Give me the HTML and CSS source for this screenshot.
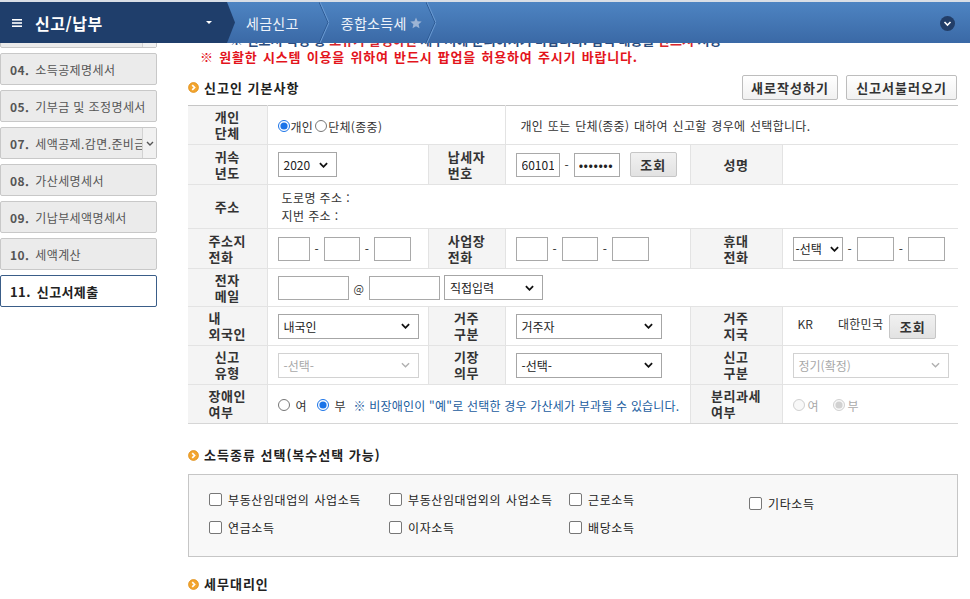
FILE: index.html
```html
<!DOCTYPE html>
<html lang="ko">
<head>
<meta charset="utf-8">
<title>신고/납부 - 종합소득세</title>
<link rel="stylesheet" href="styles.css">
</head>
<body>
<header class="topbar">
  <div class="menu">
    <svg class="hamb" viewBox="0 0 10 8"><rect x="0" y="0" width="10" height="1.6" fill="#fff"/><rect x="0" y="3.2" width="10" height="1.6" fill="#fff"/><rect x="0" y="6.4" width="10" height="1.6" fill="#fff"/></svg>
    <span class="title">신고/납부</span>
    <svg class="caret" viewBox="0 0 6 3"><polygon points="0,0 6,0 3,3" fill="#fff"/></svg>
  </div>
  <div class="crumb">
    <span class="ctext c1">세금신고</span>
    <svg class="sep" viewBox="0 0 10 41"><polyline points="0,0 9,20.5 0,41" fill="none" stroke="#2d5a93" stroke-width="1"/><polyline points="1,0 10,20.5 1,41" fill="none" stroke="#6b9bd3" stroke-width="1"/></svg>
  </div>
  <div class="crumb">
    <span class="ctext c2">종합소득세</span>
    <svg class="star" viewBox="0 0 12 12"><polygon points="6,0.5 7.6,4.3 11.7,4.6 8.6,7.3 9.5,11.3 6,9.2 2.5,11.3 3.4,7.3 0.3,4.6 4.4,4.3" fill="#9db4d4"/></svg>
    <svg class="sep sep2" viewBox="0 0 10 41"><polyline points="0,0 9,20.5 0,41" fill="none" stroke="#2d5a93" stroke-width="1"/><polyline points="1,0 10,20.5 1,41" fill="none" stroke="#6b9bd3" stroke-width="1"/></svg>
  </div>
  <div class="circle-btn"><svg viewBox="0 0 15 15"><circle cx="7.5" cy="7.5" r="7.5" fill="#223e68"/><polyline points="4.5,6 7.5,9 10.5,6" fill="none" stroke="#fff" stroke-width="1.6"/></svg></div>
</header>

<div class="layout">
  <nav class="side">
    <ul class="snav">
      <li class="ghost"><span class="txt"></span><span class="dd"></span></li>
      <li><span class="txt"><b>04.</b>소득공제명세서</span></li>
      <li><span class="txt"><b>05.</b>기부금 및 조정명세서</span></li>
      <li><span class="txt"><b>07.</b>세액공제.감면.준비금명세서</span><span class="dd"><svg viewBox="0 0 8 5"><polyline points="1,1 4,4 7,1" fill="none" stroke="#555" stroke-width="1.4"/></svg></span></li>
      <li><span class="txt"><b>08.</b>가산세명세서</span></li>
      <li><span class="txt"><b>09.</b>기납부세액명세서</span></li>
      <li><span class="txt"><b>10.</b>세액계산</span></li>
      <li class="on"><span class="txt"><b>11.</b>신고서제출</span></li>
    </ul>
  </nav>

  <main class="main">
    <div class="cutline"><span>※ 신고서 작성 중 <em>오류가 발생하면</em> 세무서에 문의하시기 바랍니다. 입력 내용을 <em>반드시</em> 저장</span></div>
    <p class="notice">※ 원활한 시스템 이용을 위하여 반드시 팝업을 허용하여 주시기 바랍니다.</p>

    <div class="sec-row">
      <h3 class="sec-title"><svg class="bul" viewBox="0 0 12 12"><circle cx="6" cy="6" r="5.4" fill="#f3a52e" stroke="#dc8a12" stroke-width="0.8"/><polyline points="4.6,3.4 7.2,6 4.6,8.6" fill="none" stroke="#fff" stroke-width="1.8"/></svg>신고인 기본사항</h3>
      <div class="btns">
        <button class="btn w96">새로작성하기</button>
        <button class="btn w111">신고서불러오기</button>
      </div>
    </div>

    <table class="form">
      <colgroup><col class="c79"><col class="c161"><col class="c77"><col class="c185"><col class="c92"><col class="c176"></colgroup>
      <tr class="h39">
        <th><span class="lb">개인<br>단체</span></th>
        <td colspan="2"><label class="rd tight"><input type="radio" name="kind" checked>개인</label><label class="rd tight"><input type="radio" name="kind">단체(종중)</label></td>
        <td colspan="3" class="desc">개인 또는 단체(종중) 대하여 신고할 경우에 선택합니다.</td>
      </tr>
      <tr class="h40">
        <th><span class="lb">귀속<br>년도</span></th>
        <td><div class="sel w59"><span>2020</span><svg class="chev" viewBox="0 0 10 6"><polyline points="1,1 5,5 9,1"/></svg></div></td>
        <th><span class="lb">납세자<br>번호</span></th>
        <td><input class="ipt w44" type="text" value="60101"><span class="dash">-</span><input class="ipt w46 pw" type="password" value="1234567"><button class="btn-s">조회</button></td>
        <th><span class="lb">성명</span></th>
        <td></td>
      </tr>
      <tr class="h44">
        <th><span class="lb">주소</span></th>
        <td colspan="5" class="addr"><div>도로명 주소 :</div><div>지번 주소 :</div></td>
      </tr>
      <tr class="h40">
        <th><span class="lb">주소지<br>전화</span></th>
        <td><input class="ipt w32" type="text"><span class="dash">-</span><input class="ipt w36" type="text"><span class="dash">-</span><input class="ipt w37" type="text"></td>
        <th><span class="lb">사업장<br>전화</span></th>
        <td><input class="ipt w32" type="text"><span class="dash">-</span><input class="ipt w36" type="text"><span class="dash">-</span><input class="ipt w37" type="text"></td>
        <th><span class="lb">휴대<br>전화</span></th>
        <td><div class="sel w50 small"><span>-선택</span><svg class="chev" viewBox="0 0 10 6"><polyline points="1,1 5,5 9,1"/></svg></div><span class="dash">-</span><input class="ipt w37" type="text"><span class="dash">-</span><input class="ipt w37" type="text"></td>
      </tr>
      <tr class="h38">
        <th><span class="lb">전자<br>메일</span></th>
        <td colspan="5"><input class="ipt w71" type="text"><span class="at">@</span><input class="ipt w71" type="text"><div class="sel w99 ml4"><span>직접입력</span><svg class="chev" viewBox="0 0 10 6"><polyline points="1,1 5,5 9,1"/></svg></div></td>
      </tr>
      <tr class="h39">
        <th><span class="lb">내<br>외국인</span></th>
        <td><div class="sel w141"><span>내국인</span><svg class="chev" viewBox="0 0 10 6"><polyline points="1,1 5,5 9,1"/></svg></div></td>
        <th><span class="lb">거주<br>구분</span></th>
        <td><div class="sel w146"><span>거주자</span><svg class="chev" viewBox="0 0 10 6"><polyline points="1,1 5,5 9,1"/></svg></div></td>
        <th><span class="lb">거주<br>지국</span></th>
        <td><span class="kr">KR</span><span class="nation">대한민국</span><button class="btn-s">조회</button></td>
      </tr>
      <tr class="h39">
        <th><span class="lb">신고<br>유형</span></th>
        <td><div class="sel w141 dis"><span>-선택-</span><svg class="chev" viewBox="0 0 10 6"><polyline points="1,1 5,5 9,1"/></svg></div></td>
        <th><span class="lb">기장<br>의무</span></th>
        <td><div class="sel w146"><span>-선택-</span><svg class="chev" viewBox="0 0 10 6"><polyline points="1,1 5,5 9,1"/></svg></div></td>
        <th><span class="lb">신고<br>구분</span></th>
        <td><div class="sel w156 dis"><span>정기(확정)</span><svg class="chev" viewBox="0 0 10 6"><polyline points="1,1 5,5 9,1"/></svg></div></td>
      </tr>
      <tr class="h39 last">
        <th><span class="lb">장애인<br>여부</span></th>
        <td colspan="3"><label class="rd"><input type="radio" name="dis">여</label><label class="rd"><input type="radio" name="dis" checked>부</label><span class="note">※ 비장애인이 "예"로 선택한 경우 가산세가 부과될 수 있습니다.</span></td>
        <th><span class="lb">분리과세<br>여부</span></th>
        <td><label class="rd off"><input type="radio" name="sep" disabled>여</label><label class="rd off"><input type="radio" name="sep" checked disabled>부</label></td>
      </tr>
    </table>

    <h3 class="sec-title sec2"><svg class="bul" viewBox="0 0 12 12"><circle cx="6" cy="6" r="5.4" fill="#f3a52e" stroke="#dc8a12" stroke-width="0.8"/><polyline points="4.6,3.4 7.2,6 4.6,8.6" fill="none" stroke="#fff" stroke-width="1.8"/></svg>소득종류 선택(복수선택 가능)</h3>
    <div class="incbox">
      <label class="ck"><span class="cb"></span>부동산임대업의 사업소득</label>
      <label class="ck"><span class="cb"></span>부동산임대업외의 사업소득</label>
      <label class="ck"><span class="cb"></span>근로소득</label>
      <label class="ck low"><span class="cb"></span>기타소득</label>
      <label class="ck"><span class="cb"></span>연금소득</label>
      <label class="ck"><span class="cb"></span>이자소득</label>
      <label class="ck"><span class="cb"></span>배당소득</label>
    </div>

    <h3 class="sec-title sec3"><svg class="bul" viewBox="0 0 12 12"><circle cx="6" cy="6" r="5.4" fill="#f3a52e" stroke="#dc8a12" stroke-width="0.8"/><polyline points="4.6,3.4 7.2,6 4.6,8.6" fill="none" stroke="#fff" stroke-width="1.8"/></svg>세무대리인</h3>
  </main>
</div>
</body>
</html>
```
FILE: styles.css
```css
html, body {
  margin: 0;
  padding: 0;
}
body {
  width: 970px;
  height: 599px;
  overflow: hidden;
  background: #fff;
  color: #333;
  font-family: "Noto Sans CJK KR", "Noto Sans", sans-serif;
  font-size: 12px;
}

/* ---------- top bar ---------- */
.topbar {
  display: flex;
  align-items: stretch;
  height: 43px;
  box-sizing: border-box;
  border-top: 2px solid #d9dee6;
  background: linear-gradient(#4e84c2, #3a69a6);
}
.menu {
  flex: none;
  width: 236px;
  display: flex;
  align-items: center;
  background: #1f3e6b;
  color: #fff;
  clip-path: polygon(0 0, 227px 0, 235px 50%, 227px 100%, 0 100%);
}
.hamb {
  width: 10px;
  height: 8px;
  margin-left: 12px;
}
.title {
  margin-left: 13px;
  font-size: 16px;
  font-weight: bold;
  letter-spacing: 0.5px;
}
.caret {
  width: 6px;
  height: 3px;
  margin-left: auto;
  margin-right: 24px;
}
.crumb {
  display: flex;
  align-items: center;
  color: #eef3fa;
  font-size: 14px;
  letter-spacing: 0.3px;
}
.ctext.c1 { margin-left: 10px; }
.ctext.c2 { margin-left: 12px; }
.sep {
  width: 10px;
  height: 41px;
  margin-left: 20px;
}
.sep2 { margin-left: 4px; }
.star {
  width: 12px;
  height: 12px;
  margin-left: 3px;
}
.circle-btn {
  margin-left: auto;
  margin-right: 15px;
  align-self: center;
  margin-top: 2px;
  width: 15px;
  height: 15px;
  display: flex;
}
.circle-btn svg { width: 15px; height: 15px; }

/* ---------- layout ---------- */
.layout {
  display: flex;
  height: 556px;
  overflow: hidden;
}
.side {
  flex: none;
  width: 157px;
  overflow: hidden;
}
.snav {
  list-style: none;
  margin: -27px 0 0;
  padding: 0;
}
.snav li {
  display: flex;
  align-items: stretch;
  height: 32px;
  margin-bottom: 5px;
  box-sizing: border-box;
  border: 1px solid #c8c8c8;
  border-radius: 2px;
  background: #ebebeb;
  color: #555;
  font-size: 12px;
  letter-spacing: 0.4px;
}
.snav .txt {
  flex: 1;
  min-width: 0;
  display: flex;
  align-items: center;
  padding-left: 9px;
  white-space: nowrap;
  overflow: hidden;
}
.snav b {
  font-weight: bold;
  margin-right: 6px;
}
.snav .dd {
  flex: none;
  width: 13px;
  display: flex;
  align-items: center;
  justify-content: center;
  border-left: 1px solid #d2d2d2;
  background: #f1f1f1;
}
.snav .dd svg { width: 8px; height: 5px; }
.snav li.on {
  background: #fff;
  border-color: #3a5d88;
  color: #222;
  font-weight: bold;
  font-size: 13px;
}

.main {
  flex: none;
  width: 770px;
  margin-left: 31px;
  overflow: hidden;
}
.cutline {
  height: 4px;
  overflow: hidden;
  padding-left: 42px;
}
.cutline span {
  display: block;
  height: 4px;
  line-height: 4px;
  margin-top: -5px;
  font-size: 13px;
  font-weight: bold;
  color: #2b4c7e;
  white-space: nowrap;
}
.cutline em { font-style: normal; color: #d8262c; }

.notice {
  margin: 3px 0 0;
  padding-left: 12px;
  line-height: 14px;
  font-size: 13px;
  font-weight: bold;
  color: #e3141c;
  letter-spacing: 0.8px;
  word-spacing: 1px;
}

.sec-row {
  display: flex;
  justify-content: space-between;
  align-items: center;
  height: 25px;
  margin-top: 11px;
  margin-bottom: 5px;
  padding-right: 1px;
}
.sec-title {
  display: flex;
  align-items: center;
  margin: 0;
  font-size: 13px;
  font-weight: bold;
  color: #222;
  line-height: 20px;
  letter-spacing: 1px;
}
.bul {
  width: 11px;
  height: 11px;
  margin-right: 5px;
}
.btns { display: flex; gap: 8px; }
.btn {
  height: 25px;
  padding: 0;
  box-sizing: border-box;
  border: 1px solid #bdbdbd;
  border-radius: 2px;
  background: linear-gradient(#ffffff, #f1f1f1);
  font-family: inherit;
  font-size: 13px;
  font-weight: bold;
  color: #333;
  letter-spacing: 1px;
}
.w96 { width: 96px; }
.w111 { width: 111px; }

/* ---------- form table ---------- */
.form {
  width: 770px;
  border-collapse: collapse;
  table-layout: fixed;
}
.c79 { width: 79px; }
.c161 { width: 161px; }
.c77 { width: 77px; }
.c185 { width: 185px; }
.c92 { width: 92px; }
.c176 { width: 176px; }
.h38 { height: 38px; }
.h39 { height: 39px; }
.h40 { height: 40px; }
.h44 { height: 44px; }
.form th, .form td {
  border: 1px solid #e3e3e3;
  padding: 0;
  vertical-align: middle;
}
.form tr:first-child > * { border-top-color: #c6c6c6; }
.form tr.last > * { border-bottom-color: #d6d6d6; }
.form tr > :first-child { border-left: 0; }
.form tr > :last-child { border-right: 0; }
.form th {
  background: #f4f4f4;
  text-align: center;
  font-size: 13px;
  font-weight: bold;
  color: #333;
  line-height: 16px;
  letter-spacing: 0.5px;
}
.lb {
  display: inline-block;
  text-align: left;
}
.form td {
  padding-left: 10px;
  white-space: nowrap;
  font-size: 12px;
  color: #333;
}
.form td.desc { padding-left: 15px; letter-spacing: 0.3px; word-spacing: 1px; }
.form td.addr { padding-left: 14px; line-height: 18px; letter-spacing: 0.4px; }

.sel {
  display: inline-flex;
  align-items: center;
  justify-content: space-between;
  vertical-align: middle;
  height: 25px;
  box-sizing: border-box;
  border: 1px solid #a6a6a6;
  background: #fff;
  padding: 0 8px 0 5px;
  font-size: 12px;
  color: #222;
}
.sel.small { padding: 0 3px 0 2px; height: 24px; }
.sel.dis { border-color: #d2d2d2; color: #a8a8a8; }
.chev {
  width: 9px;
  height: 6px;
  fill: none;
  stroke: #111;
  stroke-width: 2;
}
.sel.dis .chev { stroke: #b0b0b0; stroke-width: 1.5; }
.ml4 { margin-left: 4px; }

.ipt {
  vertical-align: middle;
  height: 24px;
  box-sizing: border-box;
  border: 1px solid #a9a9a9;
  border-radius: 0;
  padding: 0 5px;
  margin: 0;
  font-family: inherit;
  font-size: 12px;
  color: #222;
  background: #fff;
}
.ipt.pw { font-size: 13px; letter-spacing: 0.5px; padding: 0 4px; }
.w32 { width: 32px; }
.w36 { width: 36px; }
.w37 { width: 37px; }
.w44 { width: 44px; }
.w46 { width: 46px; }
.w50 { width: 50px; }
.w59 { width: 59px; }
.w71 { width: 71px; }
.w99 { width: 99px; }
.w141 { width: 141px; }
.w146 { width: 146px; }
.w156 { width: 156px; }

.dash {
  display: inline-block;
  vertical-align: middle;
  margin: 0 5px;
  color: #333;
}
.at {
  display: inline-block;
  vertical-align: middle;
  margin: 0 5px;
  font-size: 11px;
  color: #333;
}
.btn-s {
  vertical-align: middle;
  width: 47px;
  height: 25px;
  margin-left: 10px;
  padding: 0;
  box-sizing: border-box;
  border: 1px solid #c6c6c6;
  border-radius: 2px;
  background: linear-gradient(#f1f1f1, #e2e2e2);
  font-family: inherit;
  font-size: 13px;
  font-weight: bold;
  color: #333;
  letter-spacing: 1px;
}
.kr { margin-left: 5px; }
.nation { margin-left: 25px; letter-spacing: 0.3px; }
.form td .nation + .btn-s { margin-left: 6px; }

.rd {
  display: inline-flex;
  align-items: center;
  vertical-align: middle;
  margin-right: 10px;
  gap: 6px;
}
.rd input {
  width: 12px;
  height: 12px;
  margin: 0;
  accent-color: #1a73e8;
}
.rd.tight { margin-right: 2px; gap: 1px; letter-spacing: 0.3px; }
.rd.off { color: #aaa; margin-right: 14px; gap: 3px; }
.note {
  vertical-align: middle;
  margin-left: -2px;
  color: #1a5c9e;
  letter-spacing: 0.2px;
}

/* ---------- income type ---------- */
.sec2 { margin-top: 21px; }
.incbox {
  margin-top: 9px;
  height: 83px;
  box-sizing: border-box;
  border: 1px solid #c6c6c6;
  background: #f8f8f8;
  padding: 15px 0 0 20px;
  display: grid;
  grid-template-columns: repeat(4, 180px);
  grid-auto-rows: 18px;
  row-gap: 10px;
}
.ck {
  display: flex;
  align-items: center;
  gap: 6px;
  font-size: 12px;
  color: #222;
  white-space: nowrap;
  letter-spacing: 0.6px;
  word-spacing: 1px;
}
.ck.low { padding-top: 8px; }
.cb {
  flex: none;
  width: 13px;
  height: 13px;
  box-sizing: border-box;
  border: 1px solid #777;
  border-radius: 2px;
  background: #fff;
}
.sec3 { margin-top: 17px; }
```
